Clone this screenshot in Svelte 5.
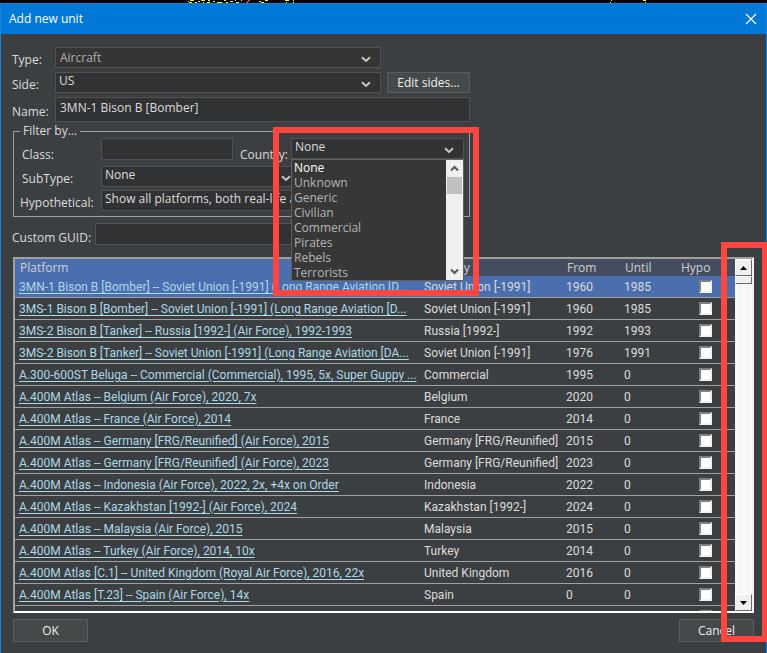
<script lang="ts">
	type Unit = { platform: string; country: string; from: number; until: number };

	const countries = ['None', 'Unknown', 'Generic', 'Civilian', 'Commercial', 'Pirates', 'Rebels', 'Terrorists'];

	const units: Unit[] = [
		{ platform: '3MN-1 Bison B [Bomber] -- Soviet Union [-1991] (Long Range Aviation [D...', country: 'Soviet Union [-1991]', from: 1960, until: 1985 },
		{ platform: '3MS-1 Bison B [Bomber] -- Soviet Union [-1991] (Long Range Aviation [D...', country: 'Soviet Union [-1991]', from: 1960, until: 1985 },
		{ platform: '3MS-2 Bison B [Tanker] -- Russia [1992-] (Air Force), 1992-1993', country: 'Russia [1992-]', from: 1992, until: 1993 },
		{ platform: '3MS-2 Bison B [Tanker] -- Soviet Union [-1991] (Long Range Aviation [DA...', country: 'Soviet Union [-1991]', from: 1976, until: 1991 },
		{ platform: 'A.300-600ST Beluga -- Commercial (Commercial), 1995, 5x, Super Guppy ...', country: 'Commercial', from: 1995, until: 0 },
		{ platform: 'A.400M Atlas -- Belgium (Air Force), 2020, 7x', country: 'Belgium', from: 2020, until: 0 },
		{ platform: 'A.400M Atlas -- France (Air Force), 2014', country: 'France', from: 2014, until: 0 },
		{ platform: 'A.400M Atlas -- Germany [FRG/Reunified] (Air Force), 2015', country: 'Germany [FRG/Reunified]', from: 2015, until: 0 },
		{ platform: 'A.400M Atlas -- Germany [FRG/Reunified] (Air Force), 2023', country: 'Germany [FRG/Reunified]', from: 2023, until: 0 },
		{ platform: 'A.400M Atlas -- Indonesia (Air Force), 2022, 2x, +4x on Order', country: 'Indonesia', from: 2022, until: 0 },
		{ platform: 'A.400M Atlas -- Kazakhstan [1992-] (Air Force), 2024', country: 'Kazakhstan [1992-]', from: 2024, until: 0 },
		{ platform: 'A.400M Atlas -- Malaysia (Air Force), 2015', country: 'Malaysia', from: 2015, until: 0 },
		{ platform: 'A.400M Atlas -- Turkey (Air Force), 2014, 10x', country: 'Turkey', from: 2014, until: 0 },
		{ platform: 'A.400M Atlas [C.1] -- United Kingdom (Royal Air Force), 2016, 22x', country: 'United Kingdom', from: 2016, until: 0 },
		{ platform: 'A.400M Atlas [T.23] -- Spain (Air Force), 14x', country: 'Spain', from: 0, until: 0 }
	];

	let name = $state('3MN-1 Bison B [Bomber]');
	let country = $state('None');
	let listOpen = $state(true);
	let selected = $state(0);

	function pick(value: string) {
		country = value;
		listOpen = false;
	}
</script>

{#snippet chevron()}
	<svg class="chevron" width="10" height="7" viewBox="0 0 10 7" aria-hidden="true">
		<path d="M1 1.3 L5 5 L9 1.3" fill="none" stroke="currentColor" stroke-width="2" />
	</svg>
{/snippet}

<svg class="map-strip" height="3" width="767" aria-hidden="true" shape-rendering="crispEdges">
	<path
		d="M188 1h1M190 0h4M189 2h3M195 2h2M198 1h2M201 0h4M203 2h1M208 0h2M207 2h3M213 1h2M217 2h5M224 0h2M226 2h2M230 1h3M235 0h1M236 2h3M241 0h1M259 1h2M261 2h3M265 0h3M285 0h4M286 2h1M293 0h1M293 2h1M611 0h1M610 2h1M643 0h3M645 2h1"
		stroke="#ffff20"
		stroke-width="1"
		transform="translate(0 .5)"
	/>
	<path d="M248 0h2M247 1h2M246 2h2" stroke="#e04850" transform="translate(0 .5)" />
</svg>

<main class="window">
	<header class="titlebar">
		<h1>Add new unit</h1>
		<button class="close" type="button" aria-label="Close">
			<svg width="12" height="12" viewBox="0 0 12 12"><path d="M1 1 L11 11 M11 1 L1 11" stroke="#fff" stroke-width="1.2" /></svg>
		</button>
	</header>

	<form class="body" onsubmit={(e) => e.preventDefault()}>
		<div class="fields">
			<label for="type">Type:</label>
			<div class="combo muted">
				<select id="type"><option>Aircraft</option></select>
				{@render chevron()}
			</div>
			<span></span>

			<label for="side">Side:</label>
			<div class="combo high">
				<select id="side"><option>US</option></select>
				{@render chevron()}
			</div>
			<button class="btn" type="button">Edit sides...</button>

			<label for="name">Name:</label>
			<input id="name" class="name" type="text" bind:value={name} />
		</div>

		<fieldset class="filter">
			<legend>Filter by...</legend>
			<label for="class">Class:</label>
			<input id="class" type="text" />
			<label class="flush" for="country">Country:</label>
			<div class="combo high country">
				<select
					id="country"
					bind:value={country}
					onmousedown={(e) => {
						e.preventDefault();
						listOpen = !listOpen;
					}}
				>
					{#each countries as c}<option>{c}</option>{/each}
				</select>
				{@render chevron()}
				{#if listOpen}
					<div class="popup">
						<ul role="listbox" aria-label="Country">
							{#each countries as c}
								<li role="option" aria-selected={c === country}>
									<button type="button" class:current={c === country} onclick={() => pick(c)}>{c}</button>
								</li>
							{/each}
						</ul>
						<div class="popup-bar">
							<svg width="9" height="7" viewBox="0 0 9 7"><path d="M1 5.5 L4.5 2 L8 5.5" /></svg>
							<span class="popup-thumb"></span>
							<svg width="9" height="7" viewBox="0 0 9 7"><path d="M1 1.5 L4.5 5 L8 1.5" /></svg>
						</div>
					</div>
				{/if}
			</div>

			<label for="subtype">SubType:</label>
			<div class="combo high subtype">
				<select id="subtype"><option>None</option></select>
				{@render chevron()}
			</div>

			<label class="flush" for="hypo">Hypothetical:</label>
			<div class="combo high hypo">
				<select id="hypo"><option>Show all platforms, both real-life and hypothetical</option></select>
			</div>
		</fieldset>

		<div class="guid">
			<label for="guid">Custom GUID:</label>
			<input id="guid" type="text" />
		</div>

		<div class="grid">
			<div class="grid-view">
				<table>
					<colgroup>
						<col class="c-platform" /><col class="c-country" /><col class="c-year" /><col class="c-until" /><col />
					</colgroup>
					<thead>
						<tr>
							<th class="sorted">Platform</th>
							<th>Country</th>
							<th>From</th>
							<th>Until</th>
							<th>Hypo</th>
						</tr>
					</thead>
					<tbody>
						{#each units as unit, i}
							<tr class:selected={i === selected} onclick={() => (selected = i)}>
								<td><a href="#unit-{i}">{unit.platform}</a></td>
								<td>{unit.country}</td>
								<td>{unit.from}</td>
								<td>{unit.until}</td>
								<td class="check"><input type="checkbox" aria-label="Hypothetical" /></td>
							</tr>
						{/each}
						<tr>
							<td></td><td></td><td></td><td></td>
							<td class="check"><input type="checkbox" aria-label="Hypothetical" /></td>
						</tr>
					</tbody>
				</table>
			</div>
			<div class="scrollbar">
				<button type="button" aria-label="Scroll up">
					<svg width="7" height="4" viewBox="0 0 7 4"><path d="M3.5 0 L7 4 H0 Z" /></svg>
				</button>
				<span class="thumb"></span>
				<button class="down" type="button" aria-label="Scroll down">
					<svg width="7" height="4" viewBox="0 0 7 4"><path d="M0 0 H7 L3.5 4 Z" /></svg>
				</button>
			</div>
		</div>

		<footer class="actions">
			<button class="btn" type="submit">OK</button>
			<button class="btn" type="button">Cancel</button>
		</footer>
	</form>

	<div class="mark mark-list"></div>
	<div class="mark mark-scroll"></div>
</main>

<style>
	:global(body) {
		background: #000;
		overflow: hidden;
	}

	* {
		box-sizing: border-box;
	}

	.map-strip {
		display: block;
	}

	.window {
		position: relative;
		min-height: calc(100vh - 3px);
		border: solid #1883d7;
		border-width: 1px 1px 0;
		background: #3c3f41;
		color: #dcdcdc;
		font-family: 'Segoe UI', 'Open Sans', sans-serif;
		font-size: 12px;
		line-height: 16px;
	}

	.titlebar {
		display: flex;
		align-items: center;
		justify-content: space-between;
		height: 30px;
		padding: 0 9px 0 8px;
		background: #0078d7;
	}

	h1 {
		margin: 0;
		color: #fff;
		font-size: 12px;
		font-weight: 400;
	}

	button,
	input,
	select {
		margin: 0;
		color: inherit;
		font: inherit;
	}

	.close {
		display: flex;
		padding: 0;
		border: 0;
		background: none;
	}

	.body {
		padding: 13px 12px 0;
	}

	.fields {
		display: grid;
		grid-template-columns: 36px 326px 83px;
		grid-template-rows: 21px 21px 25px;
		column-gap: 6px;
		row-gap: 4px;
	}

	.fields label {
		align-self: center;
		margin-left: -1px;
		padding-top: 4px;
	}

	input[type='text'],
	select {
		width: 100%;
		height: 100%;
		padding: 0 4px;
		border: 1px solid #515151;
		border-radius: 0;
		outline: none;
		background: #313233;
		appearance: none;
	}

	.fields .name {
		grid-column: 2 / 4;
		padding-bottom: 4px;
	}

	.combo {
		position: relative;
		height: 21px;
	}

	.combo.high select {
		padding: 0 3px 3px;
	}

	.muted select {
		color: #b0b0b0;
		background: #353535;
	}

	.chevron {
		position: absolute;
		right: 10px;
		bottom: 5px;
		color: #c8c8c8;
		pointer-events: none;
	}

	.btn {
		padding: 0;
		border: 1px solid #5a5c5d;
		background: #45494a;
		color: #f0f0f0;
	}

	.filter {
		display: grid;
		grid-template-columns: 74px 132px 44px 173px;
		grid-template-rows: 25px 21px 21px;
		row-gap: 3px;
		column-gap: 7px;
		width: 457px;
		margin: 2px 0 0;
		padding: 0 5px 5px 6px;
		border: 1px solid #a0a0a0;
	}

	.filter label {
		align-self: end;
		padding-left: 2px;
		white-space: nowrap;
	}

	.filter .flush {
		padding-left: 0;
	}

	.filter input {
		height: 22px;
	}

	legend {
		padding: 0 3px;
		line-height: 14px;
	}

	.popup {
		position: absolute;
		z-index: 2;
		top: 21px;
		left: 0;
		right: 0;
		display: flex;
		height: 122px;
		border: 1px solid #606060;
		background: #373737;
	}

	.popup ul {
		flex: 1;
		margin: 0;
		padding: 0;
		list-style: none;
	}

	.popup li {
		height: 15px;
	}

	.popup li button {
		display: block;
		width: 100%;
		padding: 0 2px;
		border: 0;
		background: none;
		color: #b4b4b4;
		line-height: 15px;
		text-align: left;
	}

	.popup li .current {
		color: #fff;
	}

	.popup-bar {
		display: flex;
		flex-direction: column;
		align-items: center;
		width: 17px;
		padding: 5px 0;
		background: #f0f0f0;
	}

	.popup-bar path {
		fill: none;
		stroke: #555;
		stroke-width: 2;
	}

	.popup-bar svg:last-child {
		margin-top: auto;
	}

	.popup-thumb {
		width: 15px;
		height: 17px;
		margin-top: 5px;
		background: #c0c0c0;
	}

	.subtype,
	.hypo {
		grid-column: 2 / 5;
		width: 200px;
	}

	.hypo {
		width: 355px;
	}

	.guid {
		display: flex;
		align-items: center;
		height: 22px;
		margin-top: 6px;
	}

	.guid label {
		flex: 0 0 82px;
		margin-left: -1px;
		padding: 8px 0 0;
		white-space: nowrap;
	}

	.guid input {
		flex: 0 0 300px;
		margin-left: 1px;
	}

	.grid {
		display: flex;
		height: 356px;
		margin-top: 12px;
		border: 2px solid #a0a0a0;
		border-right-color: #f4f4f4;
		border-bottom-color: #fff;
	}

	.grid-view {
		flex: 1;
		overflow: hidden;
	}

	table {
		width: 100%;
		border-collapse: separate;
		border-spacing: 0;
		table-layout: fixed;
	}

	.c-platform {
		width: 405px;
	}

	.c-country {
		width: 142px;
	}

	.c-year {
		width: 58px;
	}

	.c-until {
		width: 56px;
	}

	th {
		height: 17px;
		padding: 0 5px;
		background: #444d5f;
		color: #d0d0d0;
		font-weight: 400;
		line-height: 17px;
		text-align: left;
	}

	th.sorted,
	.selected td {
		background: #4b6eaf;
	}

	td {
		height: 22px;
		padding: 0 0 0 4px;
		border-bottom: 1px solid #a0a0a0;
		font-family: 'Segoe UI', Roboto, sans-serif;
		white-space: nowrap;
	}

	td a {
		color: #add8e6;
		text-underline-offset: 2px;
	}

	.check {
		padding-left: 23px;
	}

	.check input {
		display: block;
		width: 13px;
		height: 13px;
		border: 2px solid;
		border-color: #808080 #f0f0f0 #f0f0f0 #808080;
		background: #fff;
		appearance: none;
	}

	.scrollbar {
		display: flex;
		flex-direction: column;
		width: 17px;
		background: conic-gradient(#fff 25%, #f0f0f0 0 50%, #fff 0 75%, #f0f0f0 0) 0 0 / 2px 2px;
	}

	.scrollbar button,
	.thumb {
		display: flex;
		flex: 0 0 17px;
		align-items: center;
		justify-content: center;
		padding: 0;
		border: 1px solid;
		border-color: #fff #696969 #696969 #fff;
		background: #f0f0f0;
	}

	.thumb {
		flex-basis: 8px;
	}

	.scrollbar .down {
		margin-top: auto;
	}

	.actions {
		display: flex;
		justify-content: space-between;
		padding-top: 6px;
	}

	.actions .btn {
		width: 75px;
		height: 23px;
	}

	.mark {
		position: absolute;
		z-index: 3;
		border: 6px solid #ff4640;
		pointer-events: none;
	}

	.mark-list {
		top: 123px;
		left: 272px;
		width: 206px;
		height: 169px;
	}

	.mark-scroll {
		top: 238px;
		right: -2px;
		width: 47px;
		height: 400px;
	}
</style>
